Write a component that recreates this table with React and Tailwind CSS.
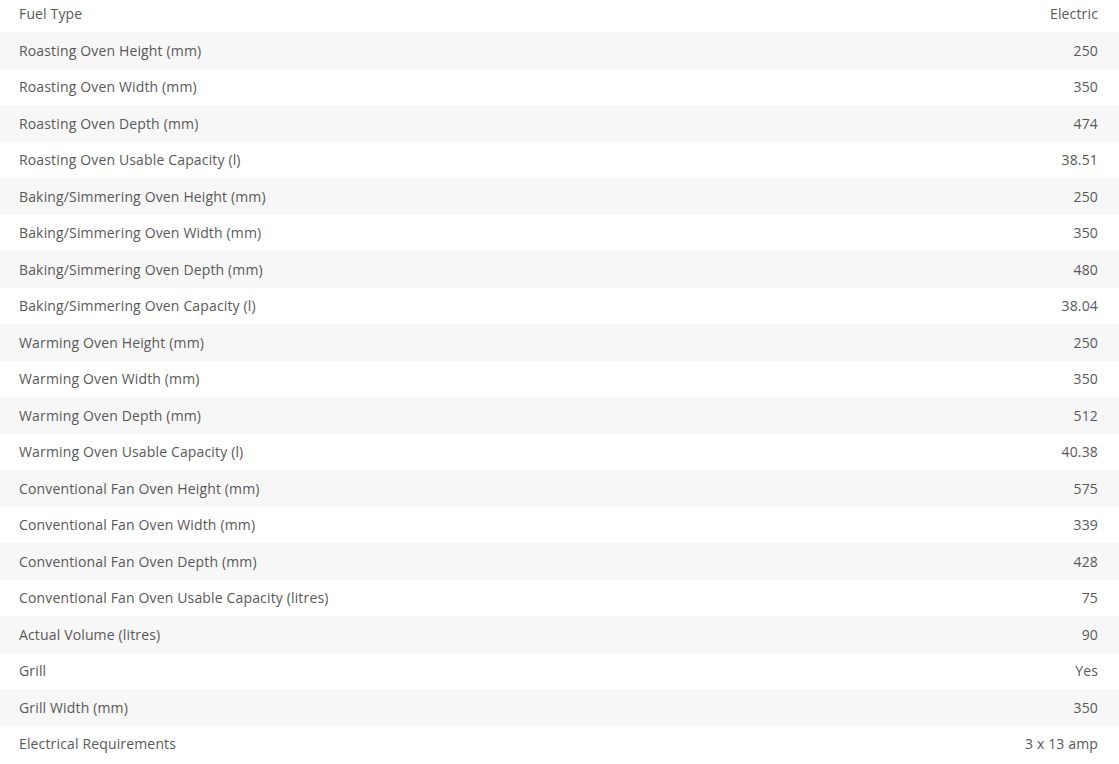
import React from 'react';

const specs = [
  ['Fuel Type', 'Electric'],
  ['Roasting Oven Height (mm)', '250'],
  ['Roasting Oven Width (mm)', '350'],
  ['Roasting Oven Depth (mm)', '474'],
  ['Roasting Oven Usable Capacity (l)', '38.51'],
  ['Baking/Simmering Oven Height (mm)', '250'],
  ['Baking/Simmering Oven Width (mm)', '350'],
  ['Baking/Simmering Oven Depth (mm)', '480'],
  ['Baking/Simmering Oven Capacity (l)', '38.04'],
  ['Warming Oven Height (mm)', '250'],
  ['Warming Oven Width (mm)', '350'],
  ['Warming Oven Depth (mm)', '512'],
  ['Warming Oven Usable Capacity (l)', '40.38'],
  ['Conventional Fan Oven Height (mm)', '575'],
  ['Conventional Fan Oven Width (mm)', '339'],
  ['Conventional Fan Oven Depth (mm)', '428'],
  ['Conventional Fan Oven Usable Capacity (litres)', '75'],
  ['Actual Volume (litres)', '90'],
  ['Grill', 'Yes'],
  ['Grill Width (mm)', '350'],
  ['Electrical Requirements', '3 x 13 amp'],
];

export default function App() {
  return (
    <div className="w-full min-h-screen bg-white overflow-hidden">
      {/* spec rows, list scrolled a few px past the top */}
      <div className="-mt-[4.5px] text-[14px] tracking-[0.15px] text-[#595959] font-['Open_Sans',sans-serif]">
        {specs.map(([label, value], i) => (
          <div
            key={label}
            className={`flex items-center justify-between h-[36.5px] pl-[19px] pr-[21px] ${i % 2 === 1 ? 'bg-[#f7f7f7]' : 'bg-white'}`}
          >
            <span>{label}</span>
            <span>{value}</span>
          </div>
        ))}
      </div>
    </div>
  );
}
